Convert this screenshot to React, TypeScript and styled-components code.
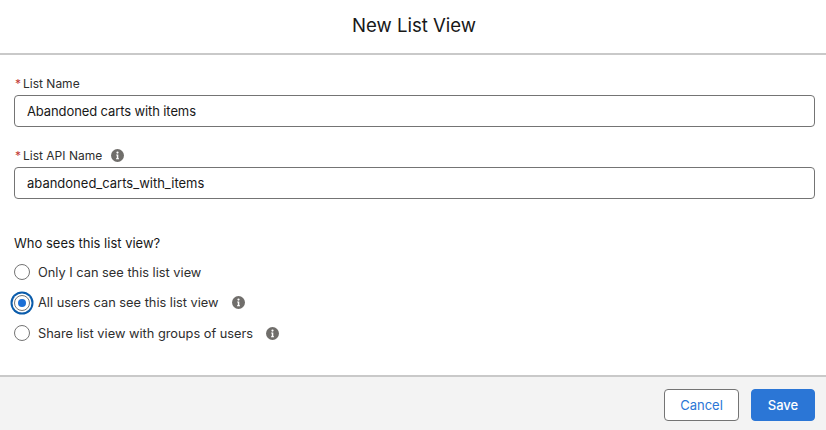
import React from "react";
import styled, { createGlobalStyle } from "styled-components";

const Global = createGlobalStyle`
  html, body { margin: 0; padding: 0; background: #fff; }
  body { font-family: Inter, "Liberation Sans", sans-serif; color: #181818; }
`;

const Modal = styled.div`
  width: 826px;
  height: 430px;
  display: flex;
  flex-direction: column;
  overflow: hidden;
`;

const Header = styled.header`
  box-sizing: content-box;
  height: 50px;
  padding: 0 0 3px 2px;
  display: flex;
  align-items: center;
  justify-content: center;
  border-bottom: 2px solid #c9c9c9;
  flex: none;
`;

const Title = styled.h1`
  margin: 0;
  font-size: 18.6px;
  font-weight: 400;
  color: #181818;
`;

const Body = styled.main`
  flex: 1;
  padding: 18px 11px 0 14px;
  display: flex;
  flex-direction: column;
`;

const Field = styled.div<{ $mb: number }>`
  display: flex;
  flex-direction: column;
  margin-bottom: ${(p) => p.$mb}px;
`;

const Label = styled.label`
  box-sizing: border-box;
  height: 22px;
  padding-bottom: 2px;
  display: flex;
  align-items: center;
  font-size: 12px;
  color: #2e2e2e;
`;

const Req = styled.span`
  color: #c23934;
  font-size: 12px;
  margin: 0 2px 0 1px;
`;

const Input = styled.input<{ $tight?: boolean }>`
  box-sizing: border-box;
  height: 32px;
  width: 801px;
  border: 1px solid #747474;
  border-radius: 4px;
  padding: 0 12px;
  font: 400 13px Inter, "Liberation Sans", sans-serif;
  letter-spacing: ${(p) => (p.$tight ? "-0.11px" : "0")};
  color: #181818;
  background: #fff;
  outline: none;
`;

const Legend = styled.div`
  font-size: 13px;
  color: #181818;
  height: 20px;
  display: flex;
  align-items: center;
  margin-bottom: 9px;
`;

const Options = styled.div`
  display: flex;
  flex-direction: column;
  gap: 10.5px;
`;

const Option = styled.div`
  height: 20px;
  display: flex;
  align-items: center;
  font-size: 12.8px;
  color: #2e2e2e;
`;

const Radio = styled.span<{ $checked?: boolean }>`
  position: relative;
  box-sizing: border-box;
  width: 16px;
  height: 16px;
  margin-right: 8px;
  flex: none;
  border-radius: 50%;
  border: 1px solid #747474;
  background: #fff;
  ${(p) =>
    p.$checked &&
    `
    box-shadow: 0 0 0 1.5px #fff, 0 0 0 3.5px #0b5cab;
    &::after {
      content: "";
      position: absolute;
      left: 3px;
      top: 3px;
      width: 8px;
      height: 8px;
      border-radius: 50%;
      background: #1b6fd6;
    }
  `}
`;

const InfoWrap = styled.span<{ $ml: number }>`
  display: inline-flex;
  margin-left: ${(p) => p.$ml}px;
`;

const Footer = styled.footer`
  flex: none;
  height: 55px;
  box-sizing: border-box;
  background: #f3f3f3;
  border-top: 2px solid #c9c9c9;
  display: flex;
  justify-content: flex-end;
  align-items: flex-start;
  gap: 12px;
  padding: 12px 11px 0 0;
`;

const Button = styled.button<{ $primary?: boolean }>`
  box-sizing: border-box;
  height: 32px;
  border-radius: 4px;
  font: 400 13px Inter, "Liberation Sans", sans-serif;
  width: ${(p) => (p.$primary ? "64px" : "75px")};
  border: 1px solid ${(p) => (p.$primary ? "#2b76d6" : "#747474")};
  background: ${(p) => (p.$primary ? "#2b76d6" : "#fff")};
  color: ${(p) => (p.$primary ? "#fff" : "#2b76d6")};
  font-weight: ${(p) => (p.$primary ? 500 : 400)};
`;

const Info = ({ ml }: { ml: number }) => (
  <InfoWrap $ml={ml}>
    <svg width="13" height="13" viewBox="0 0 13 13">
      <circle cx="6.5" cy="6.5" r="6.5" fill="#706e6b" />
      <circle cx="6.5" cy="3.6" r="1.1" fill="#fff" />
      <path d="M5.2 5.6h2.1v3.6h.7v1H5v-1h.8V6.6h-.6z" fill="#fff" />
    </svg>
  </InfoWrap>
);

export default function App() {
  return (
    <Modal>
      <Global />
      <Header>
        <Title>New List View</Title>
      </Header>
      <Body>
        <Field $mb={18}>
          <Label>
            <Req>*</Req>List Name
          </Label>
          <Input readOnly $tight value="Abandoned carts with items" />
        </Field>
        <Field $mb={34}>
          <Label>
            <Req>*</Req>List API Name
            <Info ml={9} />
          </Label>
          <Input readOnly value="abandoned_carts_with_items" />
        </Field>
        <Legend>Who sees this list view?</Legend>
        <Options>
          <Option>
            <Radio />
            Only I can see this list view
          </Option>
          <Option>
            <Radio $checked />
            All users can see this list view
            <Info ml={13} />
          </Option>
          <Option>
            <Radio />
            Share list view with groups of users
            <Info ml={13} />
          </Option>
        </Options>
      </Body>
      <Footer>
        <Button>Cancel</Button>
        <Button $primary>Save</Button>
      </Footer>
    </Modal>
  );
}
